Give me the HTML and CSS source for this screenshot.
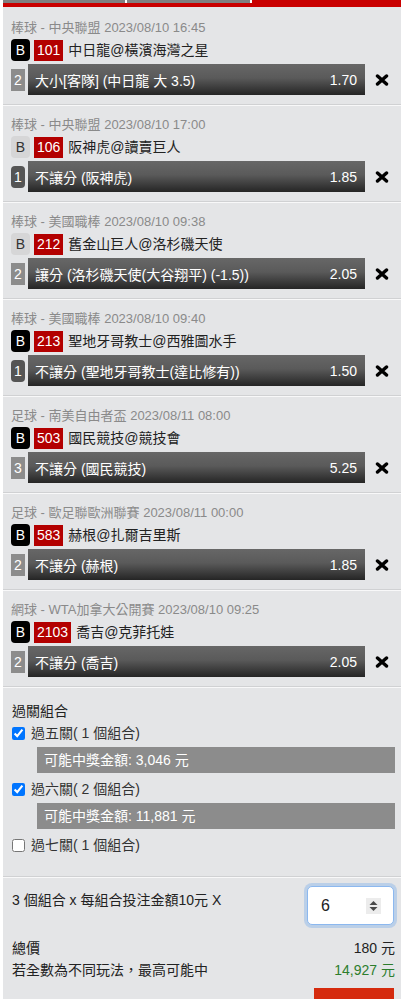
FILE: index.html
```html
<!DOCTYPE html>
<html lang="zh-Hant">
<head>
<meta charset="UTF-8">
<meta name="viewport" content="width=device-width, initial-scale=1.0">
<title>投注單</title>
<link rel="stylesheet" href="styles.css">
</head>
<body>
<div class="page">
    <div class="tabs">
        <div class="tab"></div>
        <div class="tab tab-mid"></div>
        <div class="tab active"></div>
    </div>
    <div class="redbar"></div>

    <div class="slip">
        <div class="bet">
            <div class="bet-head">棒球 - 中央聯盟 2023/08/10 16:45</div>
            <div class="bet-match"><span class="badge-b">B</span><span class="badge-no">101</span><span class="team">中日龍@橫濱海灣之星</span></div>
            <div class="bet-line"><span class="seq">2</span><div class="pick"><span>大小[客隊] (中日龍 大 3.5)</span><span>1.70</span></div><span class="remove"><svg width="14" height="12" viewBox="0 0 14 12"><path d="M2.5 2L11.5 10M11.5 2L2.5 10" stroke="#000" stroke-width="3.4" stroke-linecap="round"/></svg></span></div>
        </div>
        <div class="bet">
            <div class="bet-head">棒球 - 中央聯盟 2023/08/10 17:00</div>
            <div class="bet-match"><span class="badge-b light">B</span><span class="badge-no">106</span><span class="team">阪神虎@讀賣巨人</span></div>
            <div class="bet-line"><span class="seq dark">1</span><div class="pick"><span>不讓分 (阪神虎)</span><span>1.85</span></div><span class="remove"><svg width="14" height="12" viewBox="0 0 14 12"><path d="M2.5 2L11.5 10M11.5 2L2.5 10" stroke="#000" stroke-width="3.4" stroke-linecap="round"/></svg></span></div>
        </div>
        <div class="bet">
            <div class="bet-head">棒球 - 美國職棒 2023/08/10 09:38</div>
            <div class="bet-match"><span class="badge-b light">B</span><span class="badge-no">212</span><span class="team">舊金山巨人@洛杉磯天使</span></div>
            <div class="bet-line"><span class="seq">2</span><div class="pick"><span>讓分 (洛杉磯天使(大谷翔平) (-1.5))</span><span>2.05</span></div><span class="remove"><svg width="14" height="12" viewBox="0 0 14 12"><path d="M2.5 2L11.5 10M11.5 2L2.5 10" stroke="#000" stroke-width="3.4" stroke-linecap="round"/></svg></span></div>
        </div>
        <div class="bet">
            <div class="bet-head">棒球 - 美國職棒 2023/08/10 09:40</div>
            <div class="bet-match"><span class="badge-b">B</span><span class="badge-no">213</span><span class="team">聖地牙哥教士@西雅圖水手</span></div>
            <div class="bet-line"><span class="seq dark">1</span><div class="pick"><span>不讓分 (聖地牙哥教士(達比修有))</span><span>1.50</span></div><span class="remove"><svg width="14" height="12" viewBox="0 0 14 12"><path d="M2.5 2L11.5 10M11.5 2L2.5 10" stroke="#000" stroke-width="3.4" stroke-linecap="round"/></svg></span></div>
        </div>
        <div class="bet">
            <div class="bet-head">足球 - 南美自由者盃 2023/08/11 08:00</div>
            <div class="bet-match"><span class="badge-b">B</span><span class="badge-no">503</span><span class="team">國民競技@競技會</span></div>
            <div class="bet-line"><span class="seq">3</span><div class="pick"><span>不讓分 (國民競技)</span><span>5.25</span></div><span class="remove"><svg width="14" height="12" viewBox="0 0 14 12"><path d="M2.5 2L11.5 10M11.5 2L2.5 10" stroke="#000" stroke-width="3.4" stroke-linecap="round"/></svg></span></div>
        </div>
        <div class="bet">
            <div class="bet-head">足球 - 歐足聯歐洲聯賽 2023/08/11 00:00</div>
            <div class="bet-match"><span class="badge-b">B</span><span class="badge-no">583</span><span class="team">赫根@扎爾吉里斯</span></div>
            <div class="bet-line"><span class="seq">2</span><div class="pick"><span>不讓分 (赫根)</span><span>1.85</span></div><span class="remove"><svg width="14" height="12" viewBox="0 0 14 12"><path d="M2.5 2L11.5 10M11.5 2L2.5 10" stroke="#000" stroke-width="3.4" stroke-linecap="round"/></svg></span></div>
        </div>
        <div class="bet">
            <div class="bet-head">網球 - WTA加拿大公開賽 2023/08/10 09:25</div>
            <div class="bet-match"><span class="badge-b">B</span><span class="badge-no">2103</span><span class="team">喬吉@克菲托娃</span></div>
            <div class="bet-line"><span class="seq">2</span><div class="pick"><span>不讓分 (喬吉)</span><span>2.05</span></div><span class="remove"><svg width="14" height="12" viewBox="0 0 14 12"><path d="M2.5 2L11.5 10M11.5 2L2.5 10" stroke="#000" stroke-width="3.4" stroke-linecap="round"/></svg></span></div>
        </div>

        <div class="parlay">
            <div class="parlay-title">過關組合</div>
            <label class="combo"><input type="checkbox" checked>過五關( 1 個組合)</label>
            <div class="payout">可能中獎金額: 3,046 元</div>
            <label class="combo"><input type="checkbox" checked>過六關( 2 個組合)</label>
            <div class="payout">可能中獎金額: 11,881 元</div>
            <label class="combo"><input type="checkbox">過七關( 1 個組合)</label>
        </div>

        <div class="stake">
            <div class="stake-row">
                <span class="stake-label">3 個組合 x 每組合投注金額10元 X</span>
                <div class="qty">
                    <input type="text" value="6">
                    <span class="spin"><svg width="15" height="16" viewBox="0 0 15 16"><path d="M3.5 7L7.5 3L11.5 7Z M3.5 9L7.5 13L11.5 9Z" fill="#4a4a4a"/></svg></span>
                </div>
            </div>
            <div class="total-row"><span>總價</span><span>180 元</span></div>
            <div class="total-row"><span>若全數為不同玩法，最高可能中</span><span class="green">14,927 元</span></div>
            <div class="submit-row"><button class="submit">投注</button></div>
        </div>
    </div>
</div>
</body>
</html>
```

FILE: styles.css
```css
body {
    margin: 0;
    background-color: #fff;
    font-family: "Liberation Sans", "Noto Sans CJK TC", sans-serif;
    font-size: 14px;
    color: #222;
}
.page {
    margin-left: 3px;
}
.tabs {
    display: flex;
    gap: 2px;
    height: 3px;
}
.tab {
    width: 122px;
    background-color: #808080;
}
.tab-mid {
    width: 123px;
}
.tab.active {
    flex: 1;
    background-color: #c90000;
}
.redbar {
    height: 4px;
    background-color: #c90000;
}
.slip {
    background-color: #e4e5e7;
    padding-top: 2px;
}
.bet {
    padding: 10px 3px 9px 8px;
    border-bottom: 1px solid #d0d1d3;
}
.bet + .bet, .parlay, .stake {
    border-top: 1px solid #f8f8f9;
}
.bet-head {
    font-size: 13px;
    line-height: 18px;
    color: #8a8a8a;
}
.bet-match {
    display: flex;
    align-items: center;
    gap: 4px;
    height: 22px;
    margin-top: 2px;
}
.badge-b {
    width: 19px;
    height: 22px;
    border-radius: 4px;
    background-color: #000;
    color: #fff;
    display: flex;
    align-items: center;
    justify-content: center;
}
.badge-b.light {
    background-color: #d6d6d7;
    color: #333;
}
.badge-no {
    height: 21px;
    line-height: 21px;
    padding: 0 3px;
    background-color: #b30000;
    color: #fff;
}
.team {
    margin-left: 1px;
    line-height: 22px;
}
.bet-line {
    display: flex;
    align-items: center;
    height: 31px;
    margin-top: 3px;
}
.seq {
    width: 14px;
    height: 22px;
    line-height: 22px;
    text-align: center;
    background-color: #8c8c8c;
    color: #fff;
}
.seq.dark {
    background-color: #555;
    border-radius: 4px;
}
.pick {
    flex: 1;
    height: 31px;
    margin-left: 3px;
    padding: 0 8px 0 7px;
    display: flex;
    align-items: center;
    justify-content: space-between;
    background: linear-gradient(#676767, #5a5a5a 45%, #252525);
    color: #fff;
}
.remove {
    width: 33px;
    display: flex;
    justify-content: center;
}
.parlay {
    padding: 13px 6px 21px 9px;
    border-bottom: 1px solid #d0d1d3;
}
.parlay-title {
    line-height: 20px;
}
.combo {
    display: flex;
    align-items: center;
    line-height: 20px;
    margin-top: 2px;
    color: #333;
}
.combo input {
    width: 13px;
    height: 13px;
    margin: 0 6px 0 0;
}
.payout {
    margin: 4px 0 6px 25px;
    height: 26px;
    line-height: 26px;
    padding-left: 7px;
    background-color: #8c8c8c;
    color: #fff;
}
.stake {
    padding: 8px 6px 0 9px;
}
.stake-row {
    display: flex;
    justify-content: space-between;
    align-items: flex-start;
}
.stake-label {
    margin-top: 4px;
    line-height: 20px;
}
.qty {
    box-sizing: border-box;
    width: 87px;
    height: 39px;
    margin-right: 1px;
    padding: 0 12px 0 13px;
    display: flex;
    align-items: center;
    justify-content: space-between;
    background-color: #fff;
    border: 1px solid #8cb8ef;
    border-radius: 5px;
    box-shadow: 0 0 0 3px rgba(110, 165, 235, 0.35);
}
.qty input {
    width: 30px;
    border: none;
    outline: none;
    padding: 0;
    font-family: inherit;
    font-size: 16px;
    color: #222;
    background: transparent;
}
.spin {
    display: flex;
    background-color: #ececec;
}
.total-row {
    display: flex;
    justify-content: space-between;
    line-height: 22px;
}
.stake-row + .total-row {
    margin-top: 12px;
}
.green {
    color: #2d7d2d;
}
.submit-row {
    display: flex;
    justify-content: flex-end;
    margin-top: 7px;
}
.submit {
    width: 80px;
    height: 64px;
    margin-right: 1px;
    border: none;
    background-color: #d52b0e;
    color: #fff;
    font-family: inherit;
    font-size: 14px;
}
```
